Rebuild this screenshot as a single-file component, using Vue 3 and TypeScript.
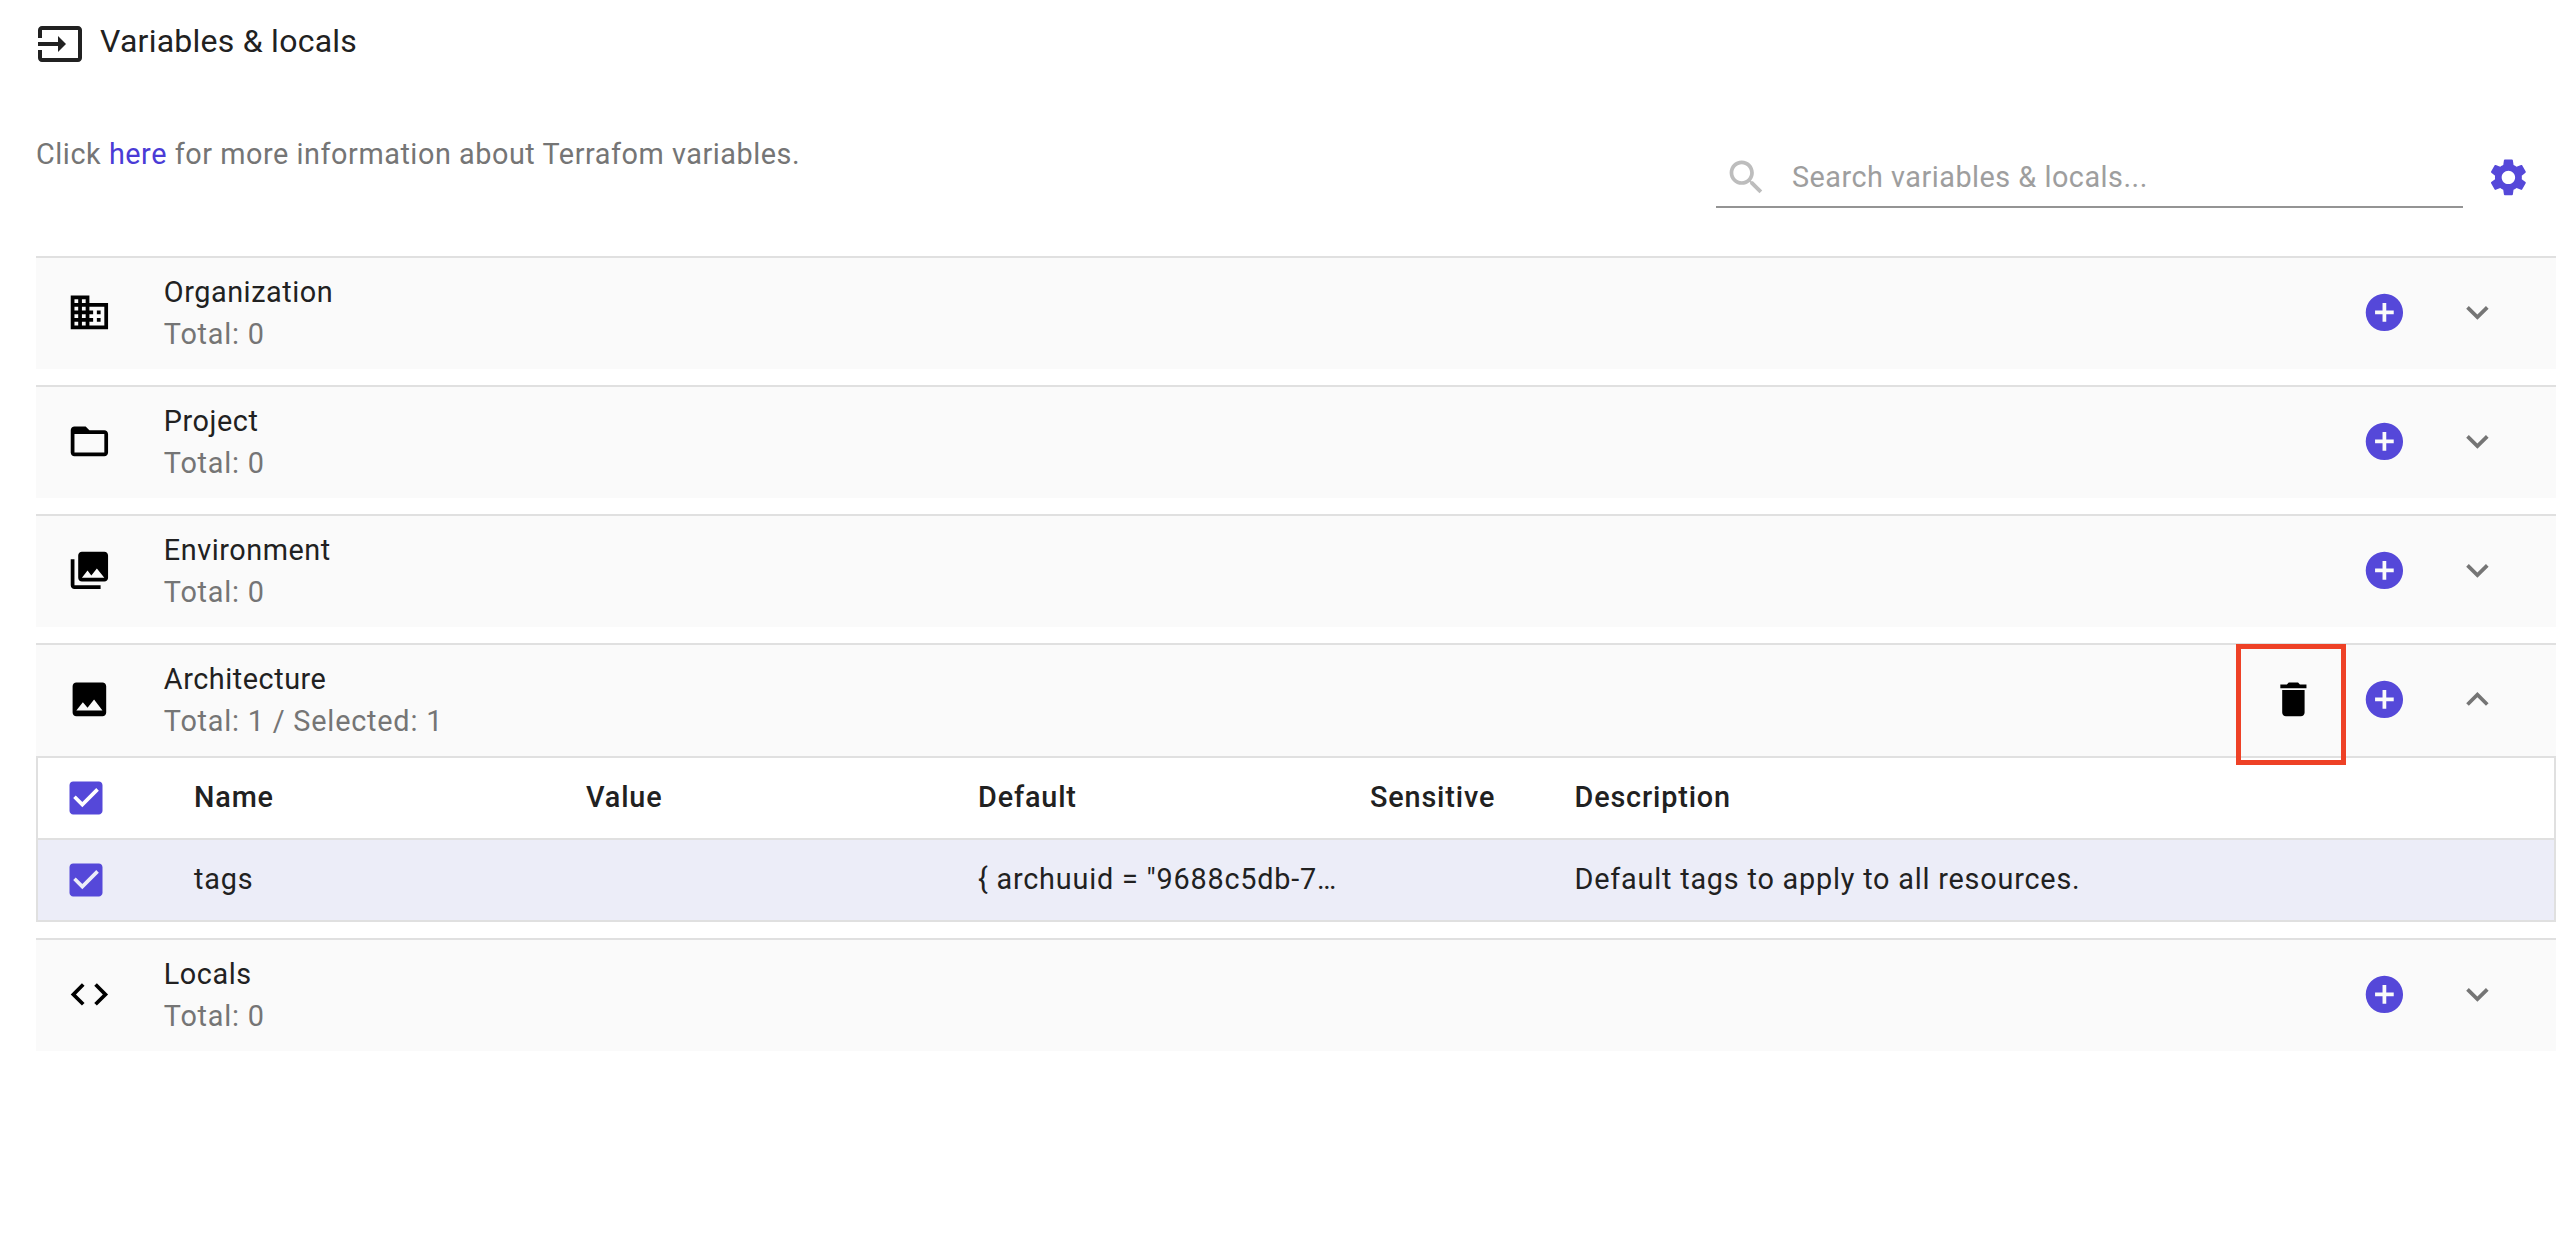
<script setup lang="ts">
interface Panel {
  name: string
  total: string
  icon: string
  open?: boolean
}
const icons: Record<string, string> = {
  domain:
    'M12 7V3H2v18h20V7H12zM6 19H4v-2h2v2zm0-4H4v-2h2v2zm0-4H4V9h2v2zm0-4H4V5h2v2zm4 12H8v-2h2v2zm0-4H8v-2h2v2zm0-4H8V9h2v2zm0-4H8V5h2v2zm10 12h-8v-2h2v-2h-2v-2h2v-2h-2V9h8v10zm-2-8h-2v2h2v-2zm0 4h-2v2h2v-2z',
  folder:
    'M20 6h-8l-2-2H4c-1.1 0-1.99.9-1.99 2L2 18c0 1.1.9 2 2 2h16c1.1 0 2-.9 2-2V8c0-1.1-.9-2-2-2zm0 12H4V8h16v10z',
  library:
    'M22 16V4c0-1.1-.9-2-2-2H8c-1.1 0-2 .9-2 2v12c0 1.1.9 2 2 2h12c1.1 0 2-.9 2-2zm-11-4l2.03 2.71L16 11l4 5H8l3-4zM2 6v14c0 1.1.9 2 2 2h14v-2H4V6H2z',
  image:
    'M21 19V5c0-1.1-.9-2-2-2H5c-1.1 0-2 .9-2 2v14c0 1.1.9 2 2 2h14c1.1 0 2-.9 2-2zM8.5 13.5l2.5 3.01L14.5 12l4.5 6H5l3.5-4.5z',
  code: 'M9.4 16.6L4.8 12l4.6-4.6L8 6l-6 6 6 6 1.4-1.4zm5.2 0l4.6-4.6-4.6-4.6L16 6l6 6-6 6-1.4-1.4z',
}
const panels: Panel[] = [
  { name: 'Organization', total: 'Total: 0', icon: 'domain' },
  { name: 'Project', total: 'Total: 0', icon: 'folder' },
  { name: 'Environment', total: 'Total: 0', icon: 'library' },
  { name: 'Architecture', total: 'Total: 1 / Selected: 1', icon: 'image', open: true },
  { name: 'Locals', total: 'Total: 0', icon: 'code' },
]
const checkPath =
  'M19 3H5c-1.1 0-2 .9-2 2v14c0 1.1.9 2 2 2h14c1.1 0 2-.89 2-2V5c0-1.11-.9-2-2-2zm-9 14l-5-5 1.41-1.41L10 14.17l7.59-7.59L19 8l-9 9z'
</script>

<template>
  <div class="page">
    <header class="title-row">
      <svg class="title-icon" viewBox="0 0 24 24">
        <path d="M21 3.01H3c-1.1 0-2 .9-2 2V9h2V4.99h18v14.03H3V15H1v4.01c0 1.1.9 1.98 2 1.98h18c1.1 0 2-.88 2-1.98v-14c0-1.11-.9-2-2-2zM11 16l4-4-4-4v3H1v2h10v3z" />
      </svg>
      <span class="title">Variables &amp; locals</span>
    </header>

    <div class="info-row">
      <p class="info">Click <a class="link">here</a> for more information about Terrafom variables.</p>
      <div class="tools">
        <div class="search">
          <svg class="search-icon" viewBox="0 0 24 24">
            <path d="M15.5 14h-.79l-.28-.27C15.41 12.59 16 11.11 16 9.5 16 5.91 13.09 3 9.5 3S3 5.91 3 9.5 5.91 16 9.5 16c1.61 0 3.09-.59 4.23-1.57l.27.28v.79l5 4.99L20.49 19l-4.99-5zm-6 0C7.01 14 5 11.99 5 9.5S7.01 5 9.5 5 14 7.01 14 9.5 11.99 14 9.5 14z" />
          </svg>
          <span class="placeholder">Search variables &amp; locals...</span>
        </div>
        <svg class="gear" viewBox="0 0 24 24">
          <path d="M19.14 12.94c.04-.3.06-.61.06-.94 0-.32-.02-.64-.07-.94l2.03-1.58c.18-.14.23-.41.12-.61l-1.92-3.32c-.12-.22-.37-.29-.59-.22l-2.39.96c-.5-.38-1.03-.7-1.62-.94l-.36-2.54c-.04-.24-.24-.41-.48-.41h-3.84c-.24 0-.43.17-.47.41l-.36 2.54c-.59.24-1.13.57-1.62.94l-2.39-.96c-.22-.08-.47 0-.59.22L2.74 8.87c-.12.21-.08.47.12.61l2.03 1.58c-.05.3-.09.63-.09.94s.02.64.07.94l-2.03 1.58c-.18.14-.23.41-.12.61l1.92 3.32c.12.22.37.29.59.22l2.39-.96c.5.38 1.03.7 1.62.94l.36 2.54c.05.24.24.41.48.41h3.84c.24 0 .44-.17.47-.41l.36-2.54c.59-.24 1.13-.56 1.62-.94l2.39.96c.22.08.47 0 .59-.22l1.92-3.32c.12-.22.07-.47-.12-.61l-2.01-1.58zM12 15.6c-1.98 0-3.6-1.62-3.6-3.6s1.62-3.6 3.6-3.6 3.6 1.62 3.6 3.6-1.62 3.6-3.6 3.6z" />
        </svg>
      </div>
    </div>

    <section v-for="p in panels" :key="p.name" class="panel">
      <div class="head">
        <svg class="panel-icon" viewBox="0 0 24 24"><path :d="icons[p.icon]" /></svg>
        <div class="labels">
          <div class="name">{{ p.name }}</div>
          <div class="total">{{ p.total }}</div>
        </div>
        <div v-if="p.open" class="trash-wrap">
          <svg class="panel-icon trash" viewBox="0 0 24 24">
            <path d="M6 19c0 1.1.9 2 2 2h8c1.1 0 2-.9 2-2V7H6v12zM19 4h-3.5l-1-1h-5l-1 1H5v2h14V4z" />
          </svg>
          <div class="highlight"></div>
        </div>
        <svg class="panel-icon add" viewBox="0 0 24 24">
          <path d="M12 2C6.48 2 2 6.48 2 12s4.48 10 10 10 10-4.48 10-10S17.52 2 12 2zm5 11h-4v4h-2v-4H7v-2h4V7h2v4h4v2z" />
        </svg>
        <svg class="panel-icon chevron" :class="{ up: p.open }" viewBox="0 0 24 24">
          <path d="M16.59 8.59L12 13.17 7.41 8.59 6 10l6 6 6-6z" />
        </svg>
      </div>

      <div v-if="p.open" class="table">
        <div class="tr th">
          <div class="check-cell">
            <svg class="check" viewBox="0 0 24 24"><path :d="checkPath" /></svg>
          </div>
          <div class="cell">Name</div>
          <div class="cell">Value</div>
          <div class="cell">Default</div>
          <div class="cell">Sensitive</div>
          <div class="cell">Description</div>
        </div>
        <div class="tr selected">
          <div class="check-cell">
            <svg class="check" viewBox="0 0 24 24"><path :d="checkPath" /></svg>
          </div>
          <div class="cell">tags</div>
          <div class="cell"></div>
          <div class="cell">{ archuuid = "9688c5db-7…</div>
          <div class="cell"></div>
          <div class="cell">Default tags to apply to all resources.</div>
        </div>
      </div>
    </section>
  </div>
</template>

<style scoped>
.page {
  padding: 20px 20px 0 36px;
  font-family: Roboto, "Liberation Sans", sans-serif;
  font-size: 28.8px;
  letter-spacing: 0.55px;
  color: #212121;
}
svg {
  display: block;
  flex: none;
}
.title-row {
  display: flex;
  align-items: center;
  gap: 16px;
  height: 48px;
}
.title-icon {
  width: 48px;
  height: 48px;
  fill: #212121;
}
.title {
  font-size: 32px;
  letter-spacing: 0.25px;
  margin-bottom: 6px;
}
.info-row {
  display: flex;
  justify-content: space-between;
  align-items: flex-start;
  height: 188px;
  padding-top: 65.5px;
  box-sizing: border-box;
}
.info {
  margin: 0;
  line-height: 40px;
  color: #757575;
}
.link {
  color: #4a3bd6;
}
.tools {
  display: flex;
  align-items: center;
  gap: 23px;
  padding-right: 25px;
  margin-top: 10.5px;
}
.search {
  display: flex;
  align-items: center;
  gap: 23px;
  width: 747px;
  height: 64px;
  padding: 4px 0 0 8px;
  box-sizing: border-box;
  border-bottom: 2px solid #949494;
  letter-spacing: 0.5px;
}
.search-icon {
  width: 44.8px;
  height: 44.8px;
  fill: #bdbdbd;
}
.placeholder {
  color: #9e9e9e;
}
.gear {
  width: 44.8px;
  height: 44.8px;
  margin-top: 2px;
  fill: #5548d9;
}
.panel {
  margin-bottom: 16px;
  border-top: 2px solid #e0e0e0;
}
.head {
  display: flex;
  align-items: center;
  height: 111px;
  box-sizing: border-box;
  padding: 0 56px 2px 31px;
  background: #fafafa;
}
.panel-icon {
  width: 44.8px;
  height: 44.8px;
  fill: #000;
}
.labels {
  flex: 1;
  margin-left: 52px;
  display: flex;
  flex-direction: column;
}
.name {
  line-height: 42px;
}
.total {
  line-height: 42px;
  letter-spacing: 0.8px;
  color: #757575;
}
.trash-wrap {
  position: relative;
}
.highlight {
  position: absolute;
  left: -35px;
  top: -33px;
  width: 110px;
  height: 121px;
  box-sizing: border-box;
  border: 5px solid #ee4126;
}
.trash {
  margin-right: 47px;
}
.add {
  fill: #5548d9;
  margin-right: 48px;
}
.chevron {
  fill: #757575;
}
.chevron.up {
  transform: rotate(180deg);
}
.table {
  border: 2px solid #e0e0e0;
}
.tr {
  display: grid;
  grid-template-columns: 130px 392px 392px 392px 204.5px 1fr;
  height: 80px;
  align-items: center;
}
.th {
  font-weight: 500;
  letter-spacing: 0.85px;
  border-bottom: 2px solid #e0e0e0;
}
.selected {
  background: #ecedf8;
  letter-spacing: 0.8px;
}
.check-cell {
  display: flex;
  padding-left: 26px;
}
.check {
  width: 44px;
  height: 44px;
  fill: #5548d9;
}
.cell {
  padding: 0 26px 2px;
  white-space: nowrap;
}
</style>
